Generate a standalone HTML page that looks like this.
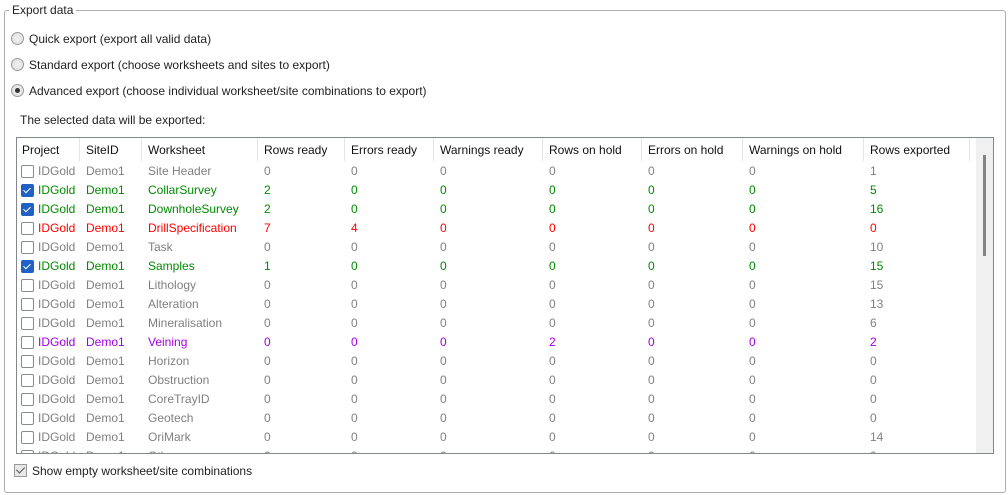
<!DOCTYPE html>
<html><head><meta charset="utf-8"><style>
*{box-sizing:border-box;margin:0;padding:0}
body{width:1008px;height:495px;background:#fff;font-family:"Liberation Sans",sans-serif;font-size:12px;color:#000;position:relative;overflow:hidden}
.grp{position:absolute;left:4px;top:10px;width:1002px;height:483px;border:1px solid #adadad;border-radius:3px}
.legend{position:absolute;left:9px;top:3px;background:#fff;padding:0 3px;color:#222}
.radio{position:absolute;left:11px;width:13px;height:13px;border-radius:50%;border:1px solid #9a9a9a;background:radial-gradient(circle,#f2f2f2 0,#dcdcdc 100%)}
.radio.on::after{content:"";position:absolute;left:3px;top:3px;width:5px;height:5px;border-radius:50%;background:#333}
.rl{position:absolute;left:29px;color:#222}
.box{position:absolute;left:16px;top:137px;width:978px;height:317px;border:1px solid #828790;overflow:hidden;background:#fff}
.sb{position:absolute;right:0;top:0;width:17px;height:316px;background:#f0f0f0}
.sb i{position:absolute;left:7px;top:17px;width:3px;height:101px;background:#858585}
.row{position:absolute;left:0;height:19px;white-space:nowrap}
.c{position:absolute;top:2px}
.hd .c{color:#111}
.sep{position:absolute;top:0;width:1px;height:23px;background:#e5e5e5}
.cb{position:absolute;left:4px;top:3px;width:13px;height:13px;border:1px solid #8a8a8a;border-radius:2px;background:#fff}
.cb.on{background:#1f62c4;border-color:#1f62c4}
.cb.on::after{content:"";position:absolute;left:3px;top:1px;width:3px;height:6px;border:solid #fff;border-width:0 1.5px 1.5px 0;transform:rotate(45deg)}
.g{color:#808080}.gr{color:#008a00}.r{color:#f00}.p{color:#a000e0}
.chk{position:absolute;left:14px;top:464px;width:13px;height:13px;border:1px solid #999;background:#e8e8e8}
.chk::after{content:"";position:absolute;left:3px;top:0px;width:4px;height:7px;border:solid #555;border-width:0 1.5px 1.5px 0;transform:rotate(45deg)}
</style></head><body>
<div class="grp"></div>
<div class="legend" style="position:absolute;left:9px;top:3px">Export data</div>
<div class="radio" style="top:32px"></div><div class="rl" style="top:32px">Quick export (export all valid data)</div>
<div class="radio" style="top:58px"></div><div class="rl" style="top:58px">Standard export (choose worksheets and sites to export)</div>
<div class="radio on" style="top:84px"></div><div class="rl" style="top:84px">Advanced export (choose individual worksheet/site combinations to export)</div>
<div style="position:absolute;left:20px;top:113px;color:#222">The selected data will be exported:</div>
<div class="box">
<div class="row hd" style="top:3px;height:22px">
<span class="c" style="left:5px">Project</span><span class="sep" style="left:62px;top:-3px"></span>
<span class="c" style="left:69px">SiteID</span><span class="sep" style="left:124px;top:-3px"></span>
<span class="c" style="left:131px">Worksheet</span><span class="sep" style="left:240px;top:-3px"></span>
<span class="c" style="left:247px">Rows ready</span><span class="sep" style="left:327px;top:-3px"></span>
<span class="c" style="left:334px">Errors ready</span><span class="sep" style="left:416px;top:-3px"></span>
<span class="c" style="left:423px">Warnings ready</span><span class="sep" style="left:525px;top:-3px"></span>
<span class="c" style="left:532px">Rows on hold</span><span class="sep" style="left:624px;top:-3px"></span>
<span class="c" style="left:631px">Errors on hold</span><span class="sep" style="left:725px;top:-3px"></span>
<span class="c" style="left:732px">Warnings on hold</span><span class="sep" style="left:846px;top:-3px"></span>
<span class="c" style="left:853px">Rows exported</span><span class="sep" style="left:952px;top:-3px"></span>
</div>

<div class="row g" style="top:24px"><span class="cb"></span><span class="c" style="left:21px">IDGold</span><span class="c" style="left:69px">Demo1</span><span class="c" style="left:131px">Site Header</span><span class="c" style="left:247px">0</span><span class="c" style="left:334px">0</span><span class="c" style="left:423px">0</span><span class="c" style="left:532px">0</span><span class="c" style="left:631px">0</span><span class="c" style="left:732px">0</span><span class="c" style="left:853px">1</span></div>
<div class="row gr" style="top:43px"><span class="cb on"></span><span class="c" style="left:21px">IDGold</span><span class="c" style="left:69px">Demo1</span><span class="c" style="left:131px">CollarSurvey</span><span class="c" style="left:247px">2</span><span class="c" style="left:334px">0</span><span class="c" style="left:423px">0</span><span class="c" style="left:532px">0</span><span class="c" style="left:631px">0</span><span class="c" style="left:732px">0</span><span class="c" style="left:853px">5</span></div>
<div class="row gr" style="top:62px"><span class="cb on"></span><span class="c" style="left:21px">IDGold</span><span class="c" style="left:69px">Demo1</span><span class="c" style="left:131px">DownholeSurvey</span><span class="c" style="left:247px">2</span><span class="c" style="left:334px">0</span><span class="c" style="left:423px">0</span><span class="c" style="left:532px">0</span><span class="c" style="left:631px">0</span><span class="c" style="left:732px">0</span><span class="c" style="left:853px">16</span></div>
<div class="row r" style="top:81px"><span class="cb"></span><span class="c" style="left:21px">IDGold</span><span class="c" style="left:69px">Demo1</span><span class="c" style="left:131px">DrillSpecification</span><span class="c" style="left:247px">7</span><span class="c" style="left:334px">4</span><span class="c" style="left:423px">0</span><span class="c" style="left:532px">0</span><span class="c" style="left:631px">0</span><span class="c" style="left:732px">0</span><span class="c" style="left:853px">0</span></div>
<div class="row g" style="top:100px"><span class="cb"></span><span class="c" style="left:21px">IDGold</span><span class="c" style="left:69px">Demo1</span><span class="c" style="left:131px">Task</span><span class="c" style="left:247px">0</span><span class="c" style="left:334px">0</span><span class="c" style="left:423px">0</span><span class="c" style="left:532px">0</span><span class="c" style="left:631px">0</span><span class="c" style="left:732px">0</span><span class="c" style="left:853px">10</span></div>
<div class="row gr" style="top:119px"><span class="cb on"></span><span class="c" style="left:21px">IDGold</span><span class="c" style="left:69px">Demo1</span><span class="c" style="left:131px">Samples</span><span class="c" style="left:247px">1</span><span class="c" style="left:334px">0</span><span class="c" style="left:423px">0</span><span class="c" style="left:532px">0</span><span class="c" style="left:631px">0</span><span class="c" style="left:732px">0</span><span class="c" style="left:853px">15</span></div>
<div class="row g" style="top:138px"><span class="cb"></span><span class="c" style="left:21px">IDGold</span><span class="c" style="left:69px">Demo1</span><span class="c" style="left:131px">Lithology</span><span class="c" style="left:247px">0</span><span class="c" style="left:334px">0</span><span class="c" style="left:423px">0</span><span class="c" style="left:532px">0</span><span class="c" style="left:631px">0</span><span class="c" style="left:732px">0</span><span class="c" style="left:853px">15</span></div>
<div class="row g" style="top:157px"><span class="cb"></span><span class="c" style="left:21px">IDGold</span><span class="c" style="left:69px">Demo1</span><span class="c" style="left:131px">Alteration</span><span class="c" style="left:247px">0</span><span class="c" style="left:334px">0</span><span class="c" style="left:423px">0</span><span class="c" style="left:532px">0</span><span class="c" style="left:631px">0</span><span class="c" style="left:732px">0</span><span class="c" style="left:853px">13</span></div>
<div class="row g" style="top:176px"><span class="cb"></span><span class="c" style="left:21px">IDGold</span><span class="c" style="left:69px">Demo1</span><span class="c" style="left:131px">Mineralisation</span><span class="c" style="left:247px">0</span><span class="c" style="left:334px">0</span><span class="c" style="left:423px">0</span><span class="c" style="left:532px">0</span><span class="c" style="left:631px">0</span><span class="c" style="left:732px">0</span><span class="c" style="left:853px">6</span></div>
<div class="row p" style="top:195px"><span class="cb"></span><span class="c" style="left:21px">IDGold</span><span class="c" style="left:69px">Demo1</span><span class="c" style="left:131px">Veining</span><span class="c" style="left:247px">0</span><span class="c" style="left:334px">0</span><span class="c" style="left:423px">0</span><span class="c" style="left:532px">2</span><span class="c" style="left:631px">0</span><span class="c" style="left:732px">0</span><span class="c" style="left:853px">2</span></div>
<div class="row g" style="top:214px"><span class="cb"></span><span class="c" style="left:21px">IDGold</span><span class="c" style="left:69px">Demo1</span><span class="c" style="left:131px">Horizon</span><span class="c" style="left:247px">0</span><span class="c" style="left:334px">0</span><span class="c" style="left:423px">0</span><span class="c" style="left:532px">0</span><span class="c" style="left:631px">0</span><span class="c" style="left:732px">0</span><span class="c" style="left:853px">0</span></div>
<div class="row g" style="top:233px"><span class="cb"></span><span class="c" style="left:21px">IDGold</span><span class="c" style="left:69px">Demo1</span><span class="c" style="left:131px">Obstruction</span><span class="c" style="left:247px">0</span><span class="c" style="left:334px">0</span><span class="c" style="left:423px">0</span><span class="c" style="left:532px">0</span><span class="c" style="left:631px">0</span><span class="c" style="left:732px">0</span><span class="c" style="left:853px">0</span></div>
<div class="row g" style="top:252px"><span class="cb"></span><span class="c" style="left:21px">IDGold</span><span class="c" style="left:69px">Demo1</span><span class="c" style="left:131px">CoreTrayID</span><span class="c" style="left:247px">0</span><span class="c" style="left:334px">0</span><span class="c" style="left:423px">0</span><span class="c" style="left:532px">0</span><span class="c" style="left:631px">0</span><span class="c" style="left:732px">0</span><span class="c" style="left:853px">0</span></div>
<div class="row g" style="top:271px"><span class="cb"></span><span class="c" style="left:21px">IDGold</span><span class="c" style="left:69px">Demo1</span><span class="c" style="left:131px">Geotech</span><span class="c" style="left:247px">0</span><span class="c" style="left:334px">0</span><span class="c" style="left:423px">0</span><span class="c" style="left:532px">0</span><span class="c" style="left:631px">0</span><span class="c" style="left:732px">0</span><span class="c" style="left:853px">0</span></div>
<div class="row g" style="top:290px"><span class="cb"></span><span class="c" style="left:21px">IDGold</span><span class="c" style="left:69px">Demo1</span><span class="c" style="left:131px">OriMark</span><span class="c" style="left:247px">0</span><span class="c" style="left:334px">0</span><span class="c" style="left:423px">0</span><span class="c" style="left:532px">0</span><span class="c" style="left:631px">0</span><span class="c" style="left:732px">0</span><span class="c" style="left:853px">14</span></div>
<div class="row g" style="top:309px"><span class="cb"></span><span class="c" style="left:21px">IDGold</span><span class="c" style="left:69px">Demo1</span><span class="c" style="left:131px">Other</span><span class="c" style="left:247px">0</span><span class="c" style="left:334px">0</span><span class="c" style="left:423px">0</span><span class="c" style="left:532px">0</span><span class="c" style="left:631px">0</span><span class="c" style="left:732px">0</span><span class="c" style="left:853px">0</span></div>
<div class="sb"><i></i></div>
</div>
<div class="chk"></div>
<div style="position:absolute;left:32px;top:464px;color:#222">Show empty worksheet/site combinations</div>
</body></html>
